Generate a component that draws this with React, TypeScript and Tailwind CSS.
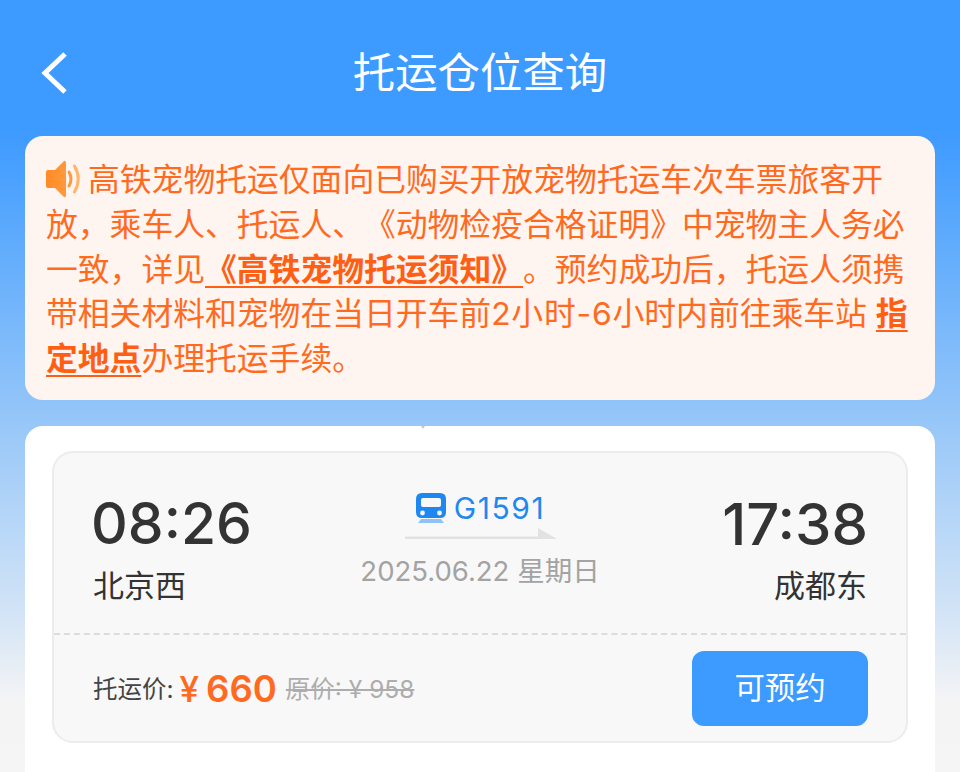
const fontStack = "font-['Inter','Noto_Sans_CJK_SC',sans-serif]"

function BackIcon() {
  return (
    <svg width="32" height="46" viewBox="0 0 32 46" fill="none">
      <path d="M26 4 L6 23 L26 42" stroke="white" strokeWidth="5" />
    </svg>
  )
}

function SpeakerIcon() {
  return (
    <svg width="35" height="38" viewBox="0 0 35 38" className="inline-block align-[-7px] mr-[7px]">
      <defs>
        <linearGradient id="spk" x1="0" y1="0" x2="1" y2="0">
          <stop offset="0" stopColor="#ff8a24" />
          <stop offset="1" stopColor="#ff9a3c" />
        </linearGradient>
      </defs>
      <path d="M0 12 Q0 10 2 10 H9 L18 1 Q20 0 20 3 V35 Q20 38 18 37 L9 28 H2 Q0 28 0 26 Z" fill="url(#spk)" />
      <path d="M23 12 Q27 19 23 26" stroke="#ff9a3c" strokeWidth="3" fill="none" strokeLinecap="round" />
      <path d="M28.5 6 Q36 19 28.5 32" stroke="#ffb56c" strokeWidth="3" fill="none" strokeLinecap="round" />
    </svg>
  )
}

function TrainIcon() {
  return (
    <svg width="32" height="31" viewBox="0 0 32 31">
      <path d="M7 0 H25 Q31 0 31 6 V19 Q31 25 25 25 H7 Q1 25 1 19 V6 Q1 0 7 0 Z" fill="#1f88f0" />
      <rect x="6" y="5" width="20" height="9" rx="2" fill="#f8f8f8" />
      <circle cx="7.5" cy="20" r="2.4" fill="#f8f8f8" />
      <circle cx="24.5" cy="20" r="2.4" fill="#f8f8f8" />
      <path d="M3 30 L6 26 H26 L29 30 Z" fill="#8fc3f7" />
    </svg>
  )
}

function ArrowLine() {
  return (
    <svg width="152" height="12" viewBox="0 0 152 12" className="block">
      <path d="M0 8.5 H133 V0 L152 11 H0 Z" fill="#e2e2e2" />
    </svg>
  )
}

export default function App() {
  return (
    <div className={`${fontStack} relative w-[960px] h-[772px] overflow-hidden px-[25px] bg-[linear-gradient(180deg,#3d9aff_0,#3d9aff_130px,#93c5f9_410px,#d5e5f6_620px,#f4f4f5_700px,#f5f5f5_772px)]`}>
      <header className="relative flex items-center justify-center h-[136px] pt-[10px]">
        <div className="absolute left-[14px] top-[50px]">
          <BackIcon />
        </div>
        <h1 className="text-[42.4px] leading-none text-white font-normal">托运仓位查询</h1>
      </header>

      <section className="h-[264px] rounded-[18px] bg-[#fff5f0] pl-[21px] pr-[20px] pt-[22px] text-[31.8px] leading-[44.8px] text-[#ff6a1f] [text-spacing-trim:space-all]">
        <SpeakerIcon />
        高铁宠物托运仅面向已购买开放宠物托运车次车票旅客开放，乘车人、托运人、《动物检疫合格证明》中宠物主人务必一致，详见
        <span className="font-bold text-[#ff5f14] underline underline-offset-[5px] decoration-2">《高铁宠物托运须知》</span>
        。预约成功后，托运人须携带相关材料和宠物在当日开车前<span className="tracking-[0.8px]">2小时-6</span>小时内前往乘车站{' '}
        <span className="font-bold text-[#ff5f14] underline underline-offset-[5px] decoration-2">指定地点</span>
        办理托运手续。
      </section>

      <main className="relative mt-[26px] h-[400px] rounded-[18px] bg-white px-[27px] pt-[25px]">
        <div className="absolute left-[396px] top-0 w-0 h-0 border-x-[2px] border-x-transparent border-t-[3px] border-t-[#c9c9c9]" />
        <div className="h-[292px] rounded-[21px] border-2 border-[#ececec] bg-[#f8f8f8]">
          <div className="grid grid-cols-[1fr_auto_1fr] h-[182px] pl-[39px] pr-[39px] border-b-2 border-dashed border-[#dcdcdc]">
            <div className="pt-[33px]">
              <div className="-ml-[2px] text-[57px] font-medium leading-[76px] text-[#333333] [font-feature-settings:'case']">08:26</div>
              <div className="mt-[2px] text-[31px] leading-[44px] text-[#333333]">北京西</div>
            </div>
            <div className="flex flex-col items-center pt-[37px]">
              <div className="flex items-center gap-[7px] h-[36px]">
                <TrainIcon />
                <span className="text-[30px] tracking-[1.6px] leading-none text-[#1f88f0]">G1591</span>
              </div>
              <div className="mt-[2px] ml-[1px]">
                <ArrowLine />
              </div>
              <div className="mt-[11px] text-[#a3a3a3] text-[27.5px] leading-[40px] whitespace-nowrap">2025.06.22 星期日</div>
            </div>
            <div className="pt-[33px] flex flex-col items-end">
              <div className="-mr-[1px] text-[58px] font-medium leading-[76px] text-[#333333] [font-feature-settings:'case']">17:38</div>
              <div className="mt-[2px] text-[31px] leading-[44px] text-[#333333]">成都东</div>
            </div>
          </div>
          <div className="flex items-center justify-between pl-[39px] pr-[38px] pt-[16px]">
            <div className="flex items-center leading-none mt-[1px]">
              <span className="text-[24.5px] text-[#444444]">托运价:</span>
              <span className="ml-[6px] text-[35px] font-medium text-[#ff6a1f]">¥</span>
              <span className="ml-[7px] text-[36.5px] font-semibold text-[#ff6a1f]">660</span>
              <span className="ml-[9px] text-[24.5px] text-[#adadad] line-through">原价: ¥ 958</span>
            </div>
            <button className="w-[176px] h-[75px] rounded-[12px] bg-[#3d9aff] text-[30.4px] text-white">可预约</button>
          </div>
        </div>
      </main>
    </div>
  )
}
